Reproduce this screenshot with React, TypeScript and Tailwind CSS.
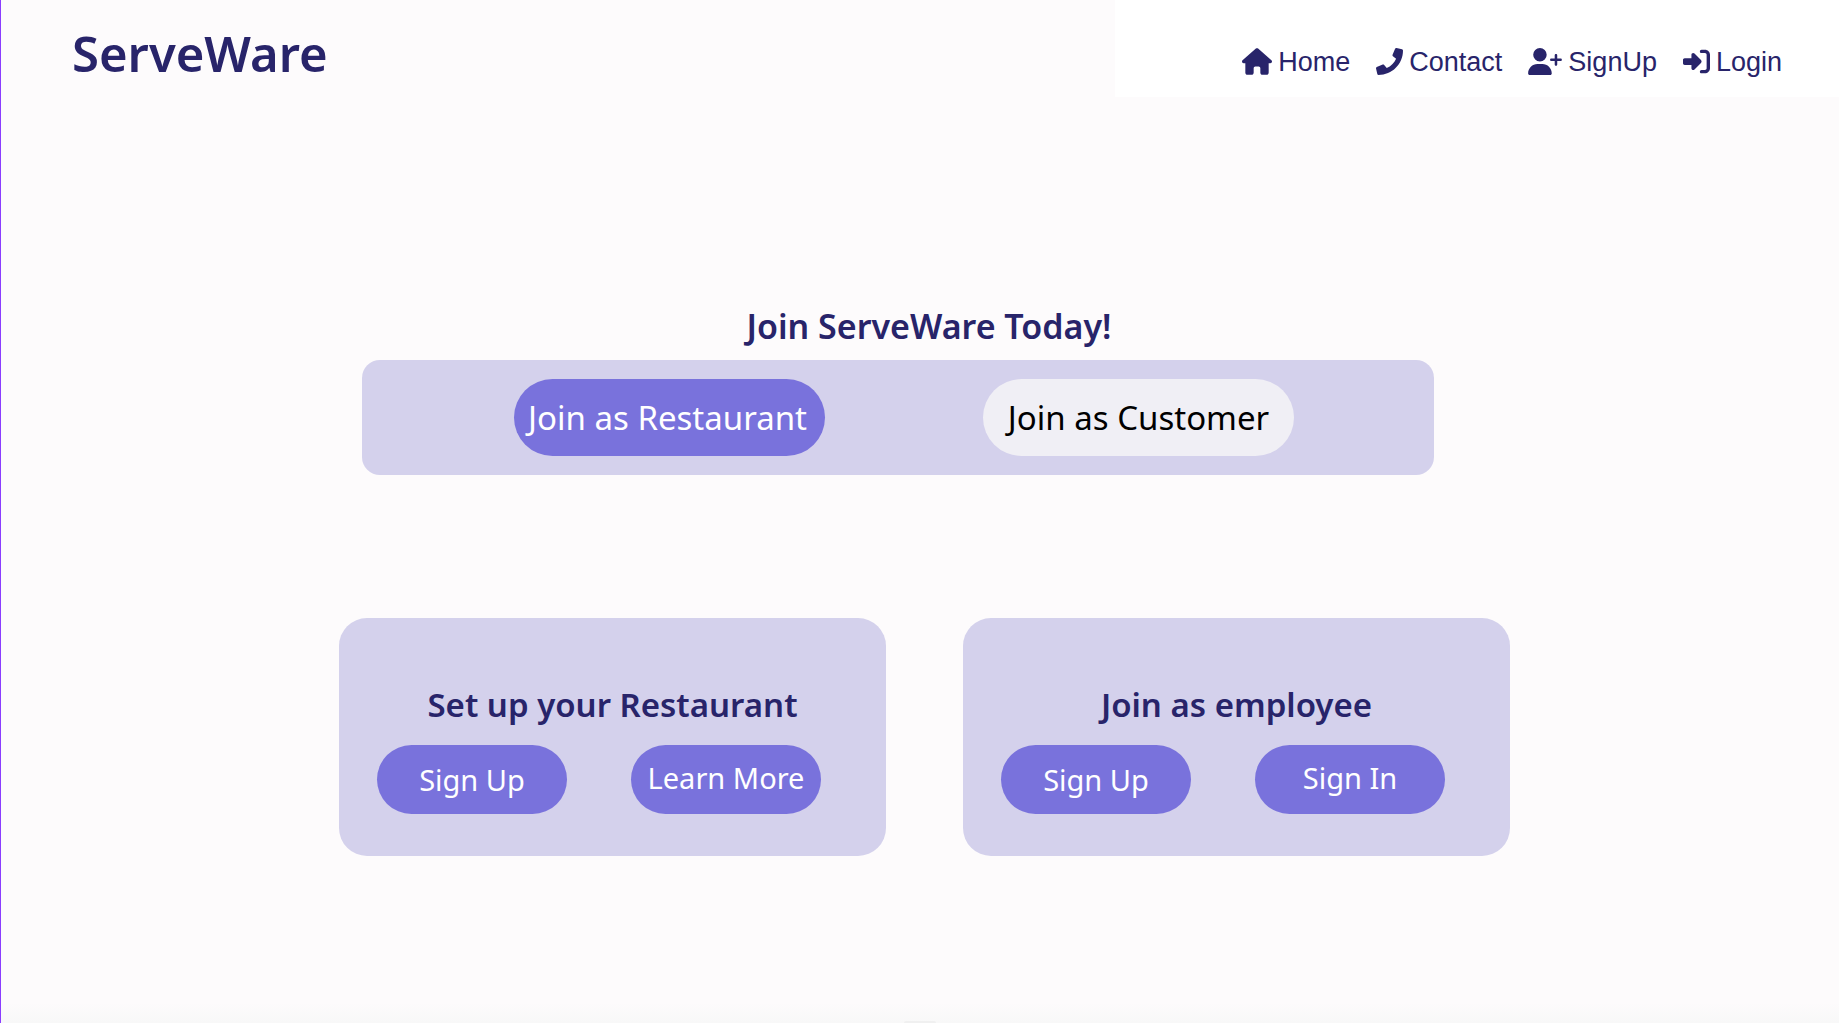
import { FaPhone } from "react-icons/fa";
import { FaHouse, FaRightToBracket, FaUserPlus } from "react-icons/fa6";

const links = [
  { label: "Home", Icon: FaHouse, size: "h-[27px] w-[30px]" },
  { label: "Contact", Icon: FaPhone, size: "h-[27px] w-[27px]" },
  { label: "SignUp", Icon: FaUserPlus, size: "h-[27px] w-[34px]" },
  { label: "Login", Icon: FaRightToBracket, size: "h-[27px] w-[27px]" },
];

function Card({ title, first, second }: { title: string; first: string; second: string }) {
  return (
    <section className="w-[547px] rounded-[28px] bg-[#d4d1ec] pt-[63px] pb-[42px]">
      <h2 className="text-center text-[33px] leading-[48px] font-semibold">{title}</h2>
      <div className="mt-4 flex gap-16 px-[38px]">
        <button className="h-[69px] w-[190px] rounded-full bg-[#7972dc] text-[29px] leading-8 whitespace-nowrap text-white">
          {first}
        </button>
        <button className="h-[69px] w-[190px] rounded-full bg-[#7972dc] pb-1 text-[29px] leading-8 whitespace-nowrap text-white">
          {second}
        </button>
      </div>
    </section>
  );
}

export default function App() {
  return (
    <div className="flex min-h-screen flex-col border-l border-[#8b3dff] bg-[#fdfbfc] font-['Noto_Sans',sans-serif] text-[#28246a]">
      <header className="flex items-start justify-between">
        <h1 className="pt-[21px] pl-[71px] text-[49px] leading-[64px] font-semibold">ServeWare</h1>
        <nav className="flex h-[97px] w-[724px] items-center justify-end gap-[26px] bg-white pt-[26px] pr-[57px] font-['Liberation_Sans',sans-serif] text-[27px] leading-8">
          {links.map(({ label, Icon, size }) => (
            <a key={label} href="#" className="flex items-center gap-[6px]">
              <Icon aria-hidden="true" className={size} />
              {label}
            </a>
          ))}
        </nav>
      </header>

      <main className="flex flex-1 flex-col items-center">
        <h2 className="mt-[205px] pl-[18px] text-[34px] leading-[48px] font-semibold">Join ServeWare Today!</h2>
        <div className="mt-[10px] mr-[44px] flex h-[115px] w-[1072px] max-w-full items-center justify-between rounded-[18px] bg-[#d4d1ec] pr-[140px] pl-[152px] text-[33px] leading-10 whitespace-nowrap">
          <button className="h-[77px] w-[311px] rounded-full bg-[#7972dc] pr-1 text-white">Join as Restaurant</button>
          <button className="h-[77px] w-[311px] rounded-full bg-[#f0eff5] text-black">Join as Customer</button>
        </div>
        <div className="mt-[143px] ml-[9px] flex gap-[77px]">
          <Card title="Set up your Restaurant" first="Sign Up" second="Learn More" />
          <Card title="Join as employee" first="Sign Up" second="Sign In" />
        </div>
      </main>

      <footer className="flex h-5 items-end justify-center bg-linear-to-b from-[#fdfbfc] to-[#f8f8f8]">
        <div className="h-[2px] w-8 rounded-t-full bg-[#f0f0f0]" />
      </footer>
    </div>
  );
}
